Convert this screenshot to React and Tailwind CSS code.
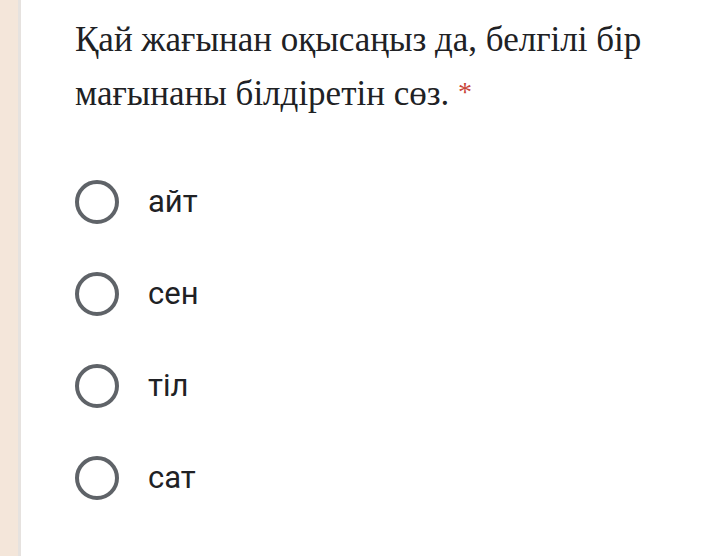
export default function App() {
  const opts = ["айт", "сен", "тіл", "сат"];
  return (
    <div className="flex w-[703px] h-[556px] bg-white overflow-hidden">
      <div className="w-[18px] bg-[#f4e6da] shrink-0" />
      <div className="w-[3px] bg-[#e6e2df] shrink-0" />
      <div className="flex-1 pl-[54px] pt-[14px]">
        <div
          className="text-[35px] leading-[52px] text-[#202124] w-[620px]"
          style={{ fontFamily: '"Liberation Serif", serif' }}
        >
          Қай жағынан оқысаңыз да, белгілі бір мағынаны білдіретін сөз.{" "}
          <span className="text-[#c9463a] text-[28px] align-[4px]">*</span>
        </div>
        <div className="mt-[60px] flex flex-col gap-[48px]">
          {opts.map((o) => (
            <div key={o} className="flex items-center h-[44px]">
              <div className="w-[44px] h-[44px] rounded-full border-[4px] border-[#5f6368] shrink-0" />
              <div
                className="ml-[29px] text-[31px] text-[#202124]"
                style={{ fontFamily: 'Roboto, sans-serif' }}
              >
                {o}
              </div>
            </div>
          ))}
        </div>
      </div>
    </div>
  );
}
